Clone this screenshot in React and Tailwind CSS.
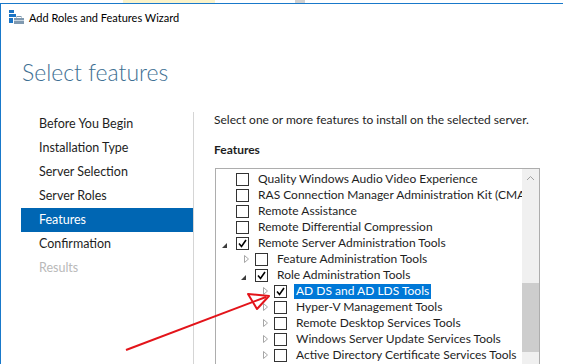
import React from "react";

const navItems = [
  { label: "Before You Begin" },
  { label: "Installation Type" },
  { label: "Server Selection" },
  { label: "Server Roles" },
  { label: "Features", active: true },
  { label: "Confirmation" },
  { label: "Results", disabled: true },
];

// level, expander ("open" | "closed" | null), checked, label, selected
const features = [
  { level: 0, exp: null, checked: false, label: "Quality Windows Audio Video Experience" },
  { level: 0, exp: null, checked: false, label: "RAS Connection Manager Administration Kit (CMAK)" },
  { level: 0, exp: null, checked: false, label: "Remote Assistance" },
  { level: 0, exp: null, checked: false, label: "Remote Differential Compression" },
  { level: 0, exp: "open", checked: true, label: "Remote Server Administration Tools" },
  { level: 1, exp: "closed", checked: false, label: "Feature Administration Tools" },
  { level: 1, exp: "open", checked: true, label: "Role Administration Tools" },
  { level: 2, exp: "closed", checked: true, label: "AD DS and AD LDS Tools", selected: true },
  { level: 2, exp: "closed", checked: false, label: "Hyper-V Management Tools" },
  { level: 2, exp: "closed", checked: false, label: "Remote Desktop Services Tools" },
  { level: 2, exp: "closed", checked: false, label: "Windows Server Update Services Tools" },
  { level: 2, exp: "closed", checked: false, label: "Active Directory Certificate Services Tools" },
];

const padByLevel = ["pl-[3px]", "pl-[22px]", "pl-[41px]"];

const Expander = ({ exp }) => {
  if (exp === "open") {
    return (
      <svg className="shrink-0" width="17" height="16" viewBox="0 0 17 16">
        <polygon points="8,8 8,13 3,13" fill="#3c3c3c" />
      </svg>
    );
  }
  if (exp === "closed") {
    return (
      <svg className="shrink-0" width="17" height="16" viewBox="0 0 17 16">
        <polygon points="6.5,4.5 10.5,8 6.5,11.5" fill="none" stroke="#a6a6a6" strokeWidth="1" />
      </svg>
    );
  }
  return <span className="w-[17px] shrink-0" />;
};

const Checkbox = ({ checked }) => (
  <span className="w-[13px] h-[13px] border border-[#333333] bg-white flex items-center justify-center shrink-0">
    {checked && (
      <svg width="11" height="11" viewBox="0 0 11 11">
        <polyline points="2,5.5 4.5,8.5 9,2" fill="none" stroke="#000" strokeWidth="1.6" />
      </svg>
    )}
  </span>
);

const WizardIcon = () => (
  <svg width="16" height="16" viewBox="0 0 16 16">
    <rect x="0" y="0" width="5" height="3" fill="#1b74c4" />
    <rect x="0" y="4" width="7" height="3" fill="#1b74c4" />
    <rect x="0" y="8" width="4" height="5" fill="#1b74c4" />
    <rect x="5" y="8" width="10" height="6" fill="#7f99b0" />
    <rect x="8" y="6.5" width="4" height="2" fill="none" stroke="#7f99b0" strokeWidth="1" />
    <rect x="5" y="10" width="10" height="1" fill="#c9d6e2" />
  </svg>
);

export default function App() {
  return (
    <div
      className="w-[563px] h-[364px] overflow-hidden relative bg-white text-[12px] text-[#1e1e1e]"
      style={{ fontFamily: '"Segoe UI", Lato, "Noto Sans", sans-serif' }}
    >
      {/* bits of the window behind */}
      <div className="h-[3px] flex">
        <div className="w-[123px]" />
        <div className="w-[92px] bg-[#fbf3c9]" />
        <div className="w-[80px]" />
        <div className="w-[10px] bg-[#d0d0d0]" />
      </div>

      <div className="border-l border-t border-[#1979ca] h-[361px] flex flex-col">
        {/* title bar */}
        <div className="h-[28px] flex items-center pl-[8px] gap-[4px] shrink-0">
          <WizardIcon />
          <span className="text-[11px] text-black">Add Roles and Features Wizard</span>
        </div>

        {/* heading */}
        <div className="h-[80px] pt-[24px] pl-[21px] shrink-0">
          <h1
            className="text-[23px] leading-[32px] font-light text-[#3e6f93]"
            style={{ fontFamily: '"Segoe UI Light", Lato, "Noto Sans", sans-serif' }}
          >
            Select features
          </h1>
        </div>

        {/* main */}
        <div className="flex flex-1 min-h-0">
          <nav className="w-[193px] pl-[20px] border-r border-[#d5d5d5] shrink-0 text-[12.5px]">
            {navItems.map((n) => (
              <div
                key={n.label}
                className={
                  "h-[24px] flex items-center pl-[18px] " +
                  (n.active
                    ? "bg-[#0066b3] text-white"
                    : n.disabled
                    ? "text-[#b9b9b9]"
                    : "text-[#1e1e1e]")
                }
              >
                {n.label}
              </div>
            ))}
          </nav>

          <div className="flex-1 pl-[20px] min-w-0">
            <div className="h-[16px] flex items-center">
              Select one or more features to install on the selected server.
            </div>
            <div className="h-[16px] mt-[14px] flex items-center font-bold">Features</div>

            <div className="mt-[10px] ml-[1px] w-[325px] h-[220px] border border-[#adadad] flex">
              <div className="flex-1 min-w-0 pt-[2px] overflow-hidden">
                {features.map((f) => (
                  <div
                    key={f.label}
                    className={"h-[16px] flex items-center whitespace-nowrap " + padByLevel[f.level]}
                  >
                    <Expander exp={f.exp} />
                    <Checkbox checked={f.checked} />
                    <span
                      className={
                        "ml-[7px] px-[2px] h-[15px] flex items-center shrink-0 " +
                        (f.selected ? "bg-[#0078d7] text-white" : "")
                      }
                    >
                      {f.label}
                    </span>
                  </div>
                ))}
              </div>
              <div className="w-[17px] bg-[#f0f0f0] flex flex-col shrink-0">
                <div className="h-[17px] flex items-center justify-center">
                  <svg width="9" height="6" viewBox="0 0 9 6">
                    <polyline points="1,5 4.5,1.5 8,5" fill="none" stroke="#a0a0a0" strokeWidth="1" />
                  </svg>
                </div>
                <div className="mt-[97px] h-[69px] bg-[#cdcdcd]" />
              </div>
            </div>
          </div>
        </div>
      </div>

      {/* red annotation arrow */}
      <svg className="absolute inset-0 pointer-events-none" width="563" height="364">
        <line x1="126" y1="350" x2="266" y2="297" stroke="#e3141a" strokeWidth="2" />
        <polygon
          points="248,294 257,309 269,296"
          fill="none"
          stroke="#e3141a"
          strokeWidth="2"
          strokeLinejoin="round"
        />
      </svg>
    </div>
  );
}
